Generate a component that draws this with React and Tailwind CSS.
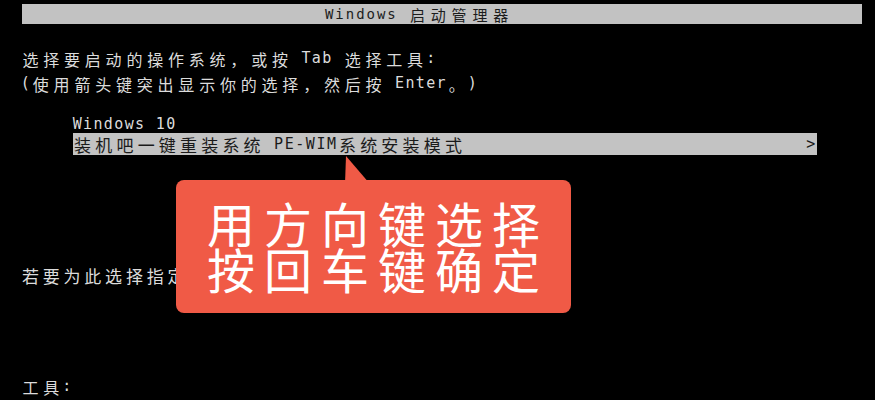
function Cells({ text, cjk, lat, wide }) {
  return [...text].map((ch, i) => {
    const full = ch.charCodeAt(0) > 0x2e80;
    let cls;
    if (wide) {
      cls = full ? "w-[21.2px] shrink-0 text-center " + cjk : "w-[10.6px] shrink-0 text-center " + lat;
    } else {
      cls = full ? "w-[20.8px] shrink-0 text-center " + cjk : "w-[10.4px] shrink-0 text-center " + lat;
    }
    return (
      <span key={i} className={cls}>
        {ch === " " ? "\u00a0" : ch}
      </span>
    );
  });
}

const CJK = "text-[16px]";
const LAT = "font-['DejaVu_Sans_Mono',monospace] text-[15px]";

export default function App() {
  return (
    <div className="relative w-[875px] h-[400px] bg-black overflow-hidden text-[#dcdcdc] font-['Noto_Sans_CJK_SC',sans-serif]">
      <div className="flex flex-col">
        {/* title bar */}
        <div className="mt-[4px] ml-[22px] w-[840px] h-[20px] bg-[#c2c2c2] flex items-center pl-[302px] text-[#1c1c1c] leading-none">
          <Cells text="Windows 启动管理器" cjk="text-[15px]" lat="font-['DejaVu_Sans_Mono',monospace] text-[14px]" />
        </div>

        {/* line 1 */}
        <div className="mt-[23px] h-[23px] pl-[20px] flex items-center leading-none">
          <Cells text="选择要启动的操作系统，或按 Tab 选择工具:" cjk={CJK} lat={LAT} />
        </div>

        {/* line 2 */}
        <div className="mt-[2px] h-[23px] pl-[20px] flex items-center leading-none">
          <Cells text="(使用箭头键突出显示你的选择，然后按 Enter。)" cjk={CJK} lat={LAT} />
        </div>

        {/* Windows 10 */}
        <div className="mt-[20px] h-[18px] pl-[72px] flex items-center leading-none">
          <Cells text="Windows 10" cjk={CJK} lat={LAT} />
        </div>

        {/* highlighted entry */}
        <div className="ml-[73px] w-[744px] h-[22px] bg-[#c3c3c3] text-[#1a1a1a] flex items-center leading-none">
          <div className="ml-[-1px] flex items-center">
            <Cells text="装机吧一键重装系统 PE-WIM系统安装模式" cjk="text-[17px]" lat={LAT} wide />
          </div>
          <span className="ml-auto mr-[1px] w-[10.4px] text-center font-['DejaVu_Sans_Mono',monospace] text-[15px]">&gt;</span>
        </div>

        {/* description line */}
        <div className="mt-[109px] h-[23px] pl-[20px] flex items-center leading-none">
          <Cells text="若要为此选择指定" cjk="text-[17px]" lat={LAT} />
        </div>

        {/* tools */}
        <div className="mt-[88px] h-[23px] pl-[20px] flex items-center leading-none">
          <Cells text="工具:" cjk={CJK} lat={LAT} />
        </div>
      </div>

      {/* callout */}
      <svg className="absolute left-[340px] top-[154px]" width="34" height="30" viewBox="0 0 34 30">
        <polygon points="6,2 5,30 30,30" fill="#f05a46" />
      </svg>
      <div className="absolute left-[176px] top-[180px] w-[395px] h-[133px] rounded-[8px] bg-[#f05a46] pt-[19px] pl-[31px] text-white text-[48px] leading-[46px] tracking-[9px]">
        <div>用方向键选择</div>
        <div>按回车键确定</div>
      </div>
    </div>
  );
}
